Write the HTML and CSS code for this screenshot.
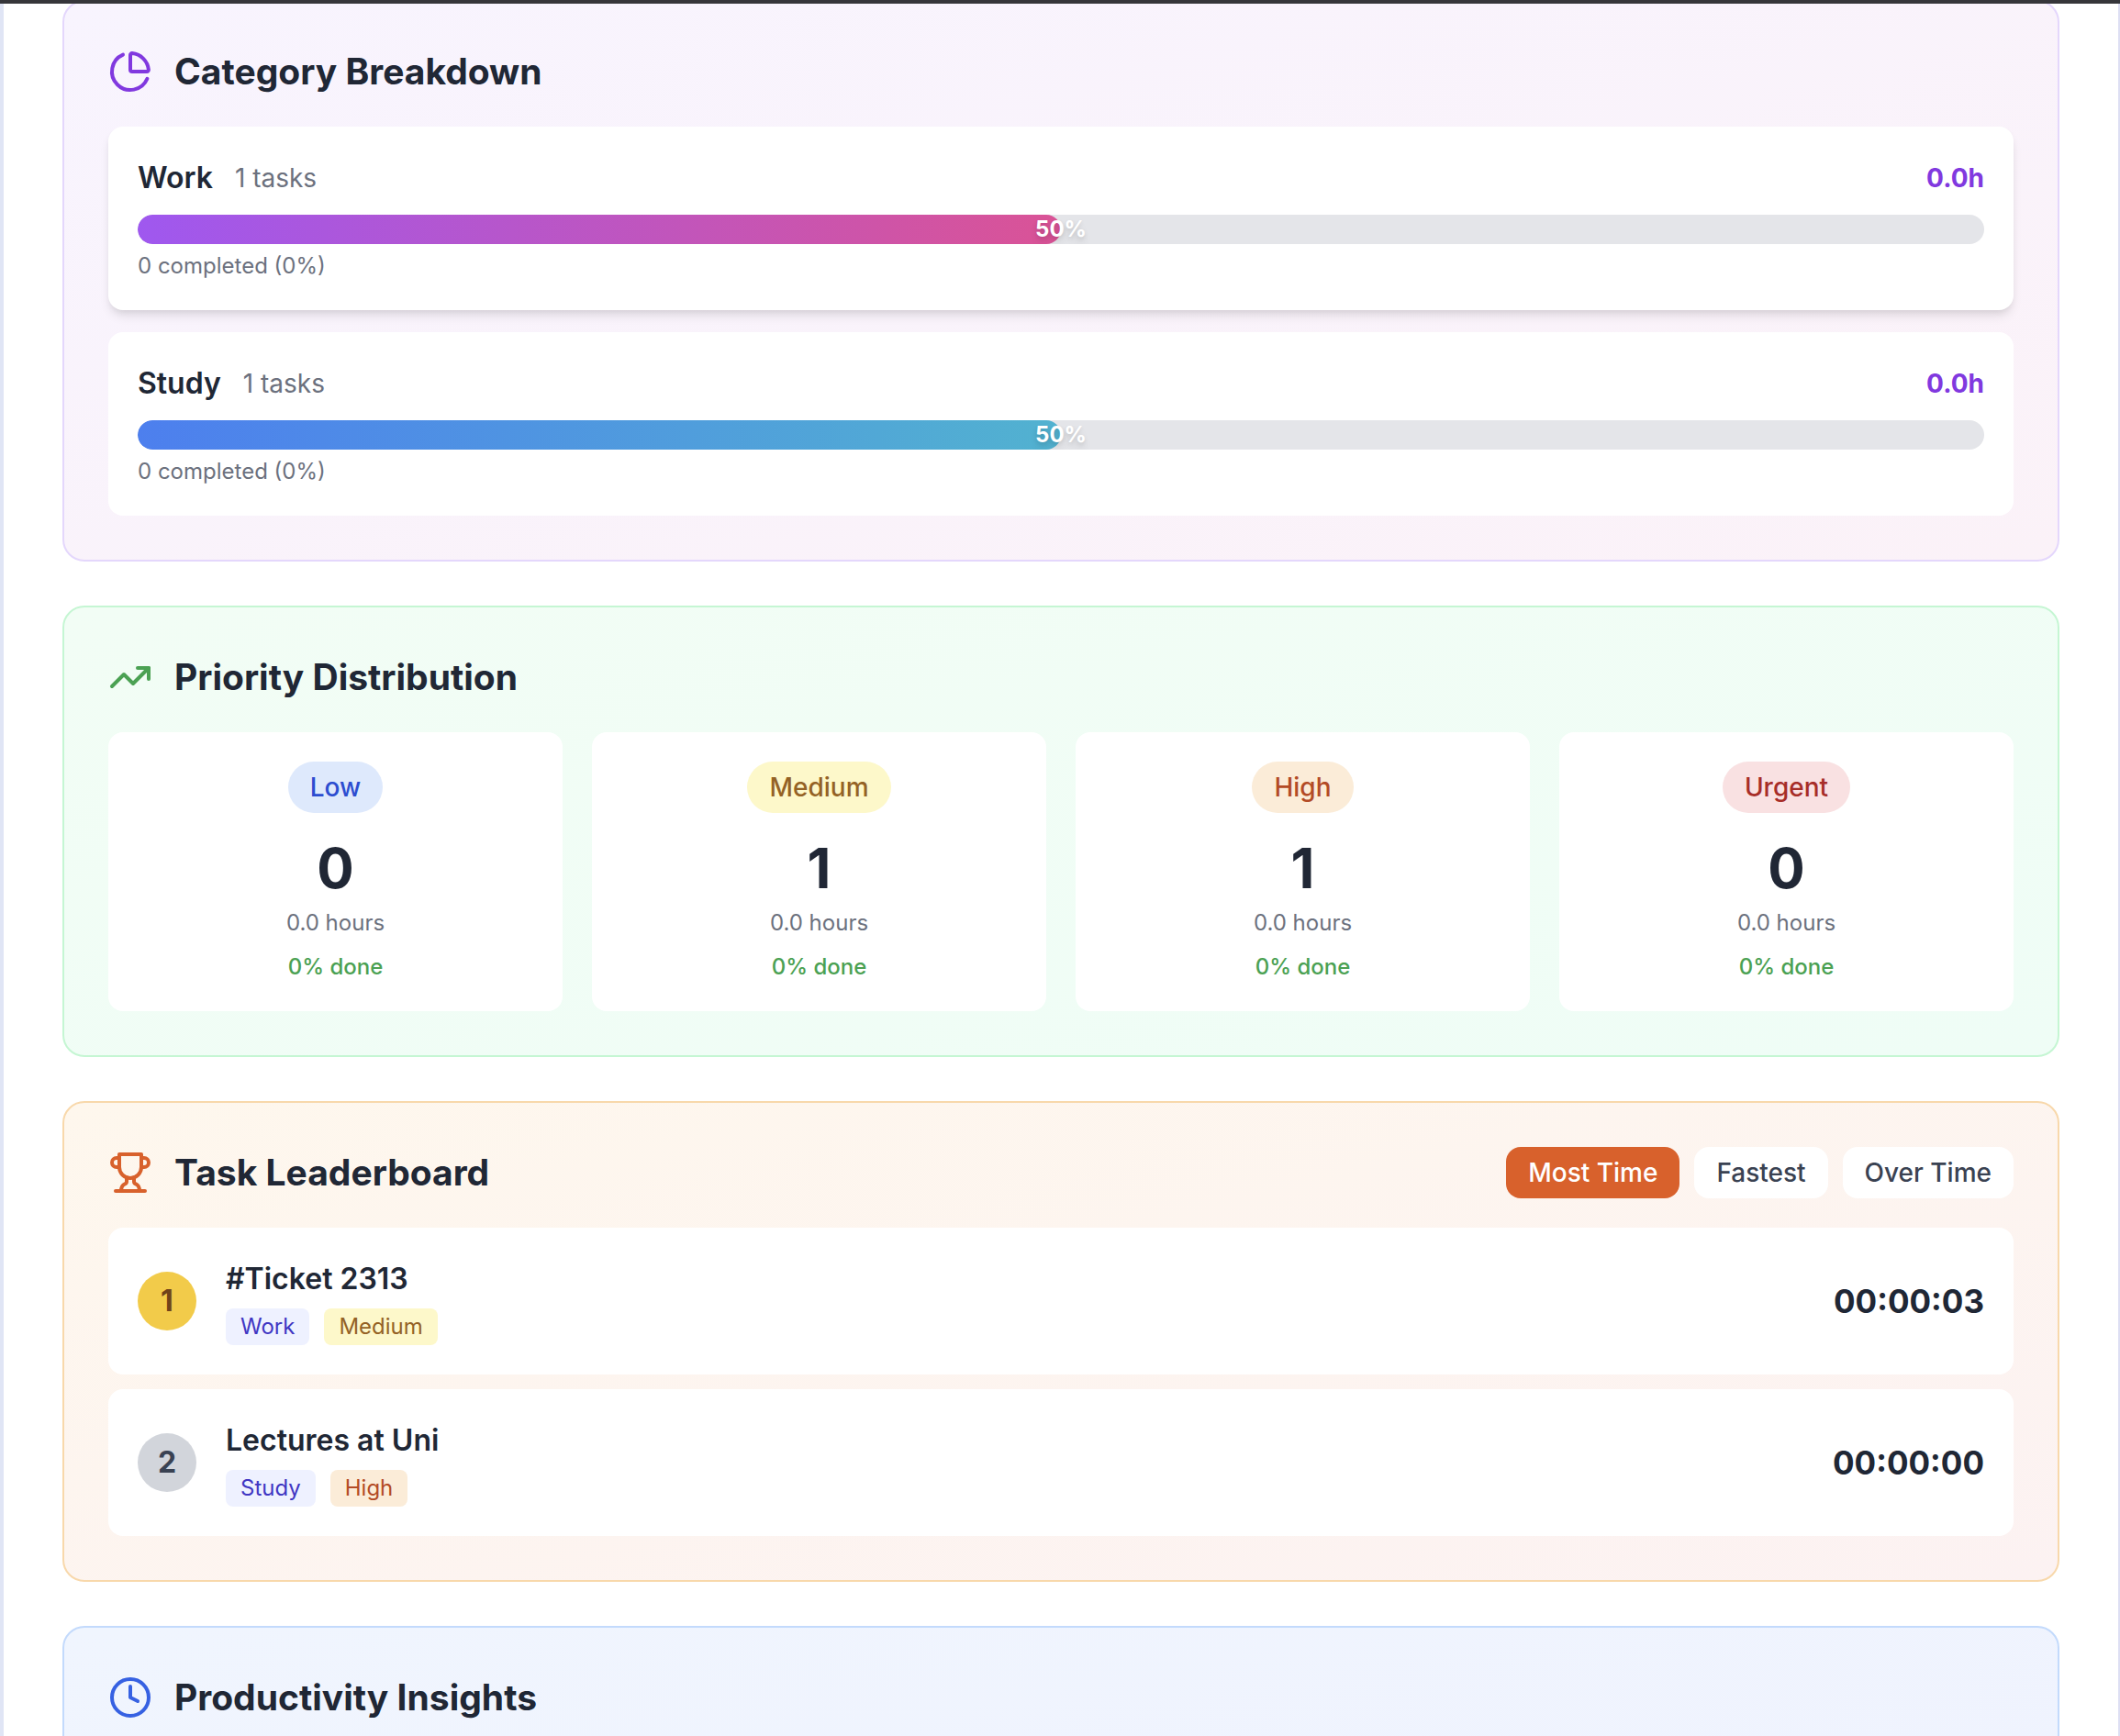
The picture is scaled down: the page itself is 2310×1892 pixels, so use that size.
FILE: index.html
```html
<!DOCTYPE html>
<html lang="en">
<head>
<meta charset="utf-8">
<meta name="viewport" content="width=device-width, initial-scale=1">
<title>Task Analytics</title>
<link rel="stylesheet" href="styles.css">
</head>
<body>
<div class="topbar"></div>
<main class="panel">
  <section class="section section-purple">
    <header class="section-head">
      <svg class="icon" viewBox="0 0 24 24" aria-hidden="true"><path d="M21 12c.552 0 1.005-.449.95-.998a10 10 0 0 0-8.953-8.951c-.55-.055-.998.398-.998.95v8a1 1 0 0 0 1 1z"/><path d="M21.21 15.89A10 10 0 1 1 8 2.83"/></svg>
      <h2 class="section-title">Category Breakdown</h2>
    </header>
    <div class="stack stack-wide">
      <article class="card card-raised">
        <div class="category-head">
          <h3 class="name">Work</h3>
          <span class="category-count">1 tasks</span>
          <span class="category-hours">0.0h</span>
        </div>
        <div class="track">
          <div class="fill fill-work" style="width: 50%"></div>
          <span class="track-label">50%</span>
        </div>
        <p class="note">0 completed (0%)</p>
      </article>
      <article class="card">
        <div class="category-head">
          <h3 class="name">Study</h3>
          <span class="category-count">1 tasks</span>
          <span class="category-hours">0.0h</span>
        </div>
        <div class="track">
          <div class="fill fill-study" style="width: 50%"></div>
          <span class="track-label">50%</span>
        </div>
        <p class="note">0 completed (0%)</p>
      </article>
    </div>
  </section>

  <section class="section section-green">
    <header class="section-head">
      <svg class="icon" viewBox="0 0 24 24" aria-hidden="true"><path d="M22 7 13.5 15.5 8.5 10.5 2 17"/><path d="M16 7h6v6"/></svg>
      <h2 class="section-title">Priority Distribution</h2>
    </header>
    <div class="priorities">
      <article class="card priority">
        <span class="chip low">Low</span>
        <strong class="priority-count">0</strong>
        <span class="note">0.0 hours</span>
        <span class="done">0% done</span>
      </article>
      <article class="card priority">
        <span class="chip medium">Medium</span>
        <strong class="priority-count">1</strong>
        <span class="note">0.0 hours</span>
        <span class="done">0% done</span>
      </article>
      <article class="card priority">
        <span class="chip high">High</span>
        <strong class="priority-count">1</strong>
        <span class="note">0.0 hours</span>
        <span class="done">0% done</span>
      </article>
      <article class="card priority">
        <span class="chip urgent">Urgent</span>
        <strong class="priority-count">0</strong>
        <span class="note">0.0 hours</span>
        <span class="done">0% done</span>
      </article>
    </div>
  </section>

  <section class="section section-orange">
    <header class="section-head">
      <svg class="icon" viewBox="0 0 24 24" aria-hidden="true"><path d="M6 9H4.5a2.5 2.5 0 0 1 0-5H6"/><path d="M18 9h1.5a2.5 2.5 0 0 0 0-5H18"/><path d="M4 22h16"/><path d="M10 14.66V17c0 .55-.47.98-.97 1.21C7.85 18.75 7 20.24 7 22"/><path d="M14 14.66V17c0 .55.47.98.97 1.21C16.15 18.75 17 20.24 17 22"/><path d="M18 2H6v7a6 6 0 0 0 12 0V2Z"/></svg>
      <h2 class="section-title">Task Leaderboard</h2>
      <div class="filters">
        <button type="button" class="filter filter-active">Most Time</button>
        <button type="button" class="filter">Fastest</button>
        <button type="button" class="filter">Over Time</button>
      </div>
    </header>
    <div class="stack">
      <article class="card entry">
        <span class="rank rank-gold">1</span>
        <div class="entry-body">
          <h3 class="name">#Ticket 2313</h3>
          <div class="tags"><span class="tag category">Work</span><span class="tag medium">Medium</span></div>
        </div>
        <span class="entry-time">00:00:03</span>
      </article>
      <article class="card entry">
        <span class="rank rank-silver">2</span>
        <div class="entry-body">
          <h3 class="name">Lectures at Uni</h3>
          <div class="tags"><span class="tag category">Study</span><span class="tag high">High</span></div>
        </div>
        <span class="entry-time">00:00:00</span>
      </article>
    </div>
  </section>

  <section class="section section-blue">
    <header class="section-head">
      <svg class="icon" viewBox="0 0 24 24" aria-hidden="true"><circle cx="12" cy="12" r="10"/><path d="M12 6v6l4 2"/></svg>
      <h2 class="section-title">Productivity Insights</h2>
    </header>
  </section>
</main>
</body>
</html>
```
FILE: styles.css
```css
*, *::before, *::after { box-sizing: border-box; }

body {
  margin: 0;
  height: 100vh;
  overflow: hidden;
  padding: 0 2px 0 4px;
  background: linear-gradient(to right, #e0e5f5, #dddff3);
  color: #202735;
  font-family: Inter, "Liberation Sans", sans-serif;
  font-size: 28px;
  line-height: 40px;
}

h2, h3, p { margin: 0; }

/* Edge of the window frame, lying over the scrolled page */
.topbar {
  position: absolute;
  inset: 0 0 auto;
  height: 4px;
  background: #36363a;
}

.panel {
  display: flex;
  flex-direction: column;
  gap: 48px;
  padding: 0 64px;
  background: #fff;
}

.section {
  padding: 48px;
  border: 2px solid;
  border-radius: 24px;
}
.section-purple { background: linear-gradient(to bottom right, #f8f4fe, #fbf2f8); border-color: #e4d7fc; }
.section-green { background: linear-gradient(to bottom right, #f2fdf5, #effdf6); border-color: #c5f6d3; }
.section-orange { background: linear-gradient(to bottom right, #fef7ed, #fcf2f2); border-color: #f8d8ab; }
.section-blue { min-height: 400px; background: linear-gradient(to bottom right, #f0f5fe, #eff2fe); border-color: #c3dafc; }

.section-head {
  display: flex;
  align-items: center;
  gap: 24px;
  min-height: 56px;
  margin-bottom: 32px;
}
.section-title { font-size: 39px; line-height: 56px; font-weight: 700; }

.icon {
  width: 48px;
  height: 48px;
  fill: none;
  stroke: currentColor;
  stroke-width: 2;
  stroke-linecap: round;
  stroke-linejoin: round;
}
.section-purple .icon { color: #8139df; }
.section-green .icon { color: #4ba153; }
.section-orange .icon { color: #d8612c; }
.section-blue .icon { color: #3661e2; }

.card { padding: 32px; border-radius: 16px; background: #fff; }
.card-raised { box-shadow: 0 8px 12px -2px rgba(0, 0, 0, .1), 0 4px 8px -4px rgba(0, 0, 0, .1); }

.stack { display: flex; flex-direction: column; gap: 16px; }
.stack-wide { gap: 24px; }

.name { font-size: 32px; line-height: 48px; font-weight: 600; }
.note { color: #6c717e; font-size: 24px; line-height: 32px; }

/* Category rows */
.category-head { display: flex; align-items: center; gap: 24px; margin-bottom: 16px; }
.category-count { color: #6c717e; }
.category-hours { margin-left: auto; color: #8139df; font-weight: 700; }

.track {
  position: relative;
  height: 32px;
  margin-bottom: 8px;
  overflow: hidden;
  border-radius: 16px;
  background: #e4e5e9;
}
.fill { height: 100%; border-radius: 16px; }
.fill-work { background: linear-gradient(to right, #9f58ef, #da5396); }
.fill-study { background: linear-gradient(to right, #4d7fee, #52b2d0); }
.track-label {
  position: absolute;
  inset: 0;
  color: #fff;
  font-size: 24px;
  line-height: 32px;
  font-weight: 700;
  text-align: center;
  text-shadow: 0 6px 8px rgba(0, 0, 0, .1), 0 2px 4px rgba(0, 0, 0, .1);
}

/* Priority tiles */
.priorities { display: grid; grid-template-columns: repeat(4, 1fr); gap: 32px; }
.priority { display: flex; flex-direction: column; align-items: center; }
.chip { padding: 8px 24px; border-radius: 28px; font-weight: 500; }
.priority-count { margin: 24px 0 8px; font-size: 60px; line-height: 72px; font-weight: 700; }
.done { margin-top: 16px; color: #4ba153; font-size: 24px; line-height: 32px; font-weight: 500; }

.low { background: #dee9fc; color: #2c4dd0; }
.medium { background: #fdf8ca; color: #946225; }
.high { background: #fbecd8; color: #b34b26; }
.urgent { background: #f9e1e2; color: #a72d28; }
.category { background: #eef1ff; color: #4036c3; }

/* Leaderboard */
.filters { display: flex; gap: 16px; margin-left: auto; }
.filter {
  padding: 8px 24px;
  border: 0;
  border-radius: 16px;
  background: #fff;
  color: #3a4252;
  font: inherit;
  font-weight: 500;
  cursor: pointer;
}
.filter-active { background: #d8612c; color: #fff; }

.entry { display: flex; align-items: center; gap: 32px; }
.entry-body { flex: 1; }
.rank {
  width: 64px;
  border-radius: 50%;
  font-size: 32px;
  line-height: 64px;
  font-weight: 700;
  text-align: center;
}
.rank-gold { background: #f2cb4a; color: #70431a; }
.rank-silver { background: #d2d5db; color: #3a4252; }
.tags { display: flex; gap: 16px; margin-top: 8px; }
.tag { padding: 4px 16px; border-radius: 8px; font-size: 24px; line-height: 32px; }
.entry-time { font-size: 35px; line-height: 56px; font-weight: 700; }
```
